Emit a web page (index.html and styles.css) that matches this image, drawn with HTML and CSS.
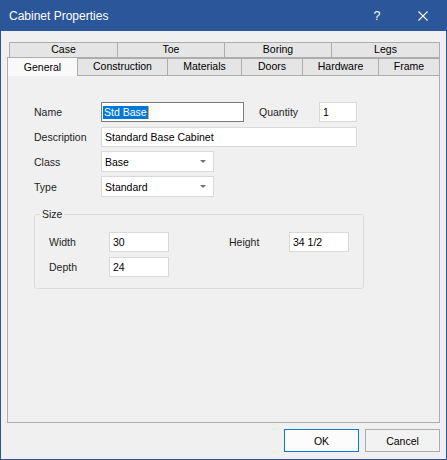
FILE: index.html
```html
<!DOCTYPE html>
<html>
<head>
<meta charset="utf-8">
<link rel="stylesheet" href="styles.css">
</head>
<body>
<div class="window">
  <div class="titlebar">
    <span class="title">Cabinet Properties</span>
    <span class="tbtn help">?</span>
    <span class="tbtn close"><svg width="10" height="10" viewBox="0 0 10 10"><path d="M0.5 0.5L9.5 9.5M9.5 0.5L0.5 9.5" stroke="#fff" stroke-width="1.1" fill="none"/></svg></span>
  </div>
  <div class="tabs">
    <div class="tabrow row1">
      <div class="tab t1a">Case</div>
      <div class="tab t1b">Toe</div>
      <div class="tab t1b">Boring</div>
      <div class="tab t1a">Legs</div>
    </div>
    <div class="tabrow row2">
      <div class="tab selected t-general">General</div>
      <div class="tab t-construction">Construction</div>
      <div class="tab t-materials">Materials</div>
      <div class="tab t-doors">Doors</div>
      <div class="tab t-hardware">Hardware</div>
      <div class="tab t-frame">Frame</div>
    </div>
  </div>
  <div class="panel">
    <div class="row">
      <span class="lbl">Name</span>
      <div class="input name-input"><span class="sel">Std Base</span><span class="caret"></span></div>
      <span class="lbl qty-lbl">Quantity</span>
      <div class="input qty">1</div>
    </div>
    <div class="row gap5">
      <span class="lbl">Description</span>
      <div class="input desc">Standard Base Cabinet</div>
    </div>
    <div class="row tall gap4">
      <span class="lbl">Class</span>
      <div class="input select"><span>Base</span><span class="arrow"></span></div>
    </div>
    <div class="row tall gap4">
      <span class="lbl">Type</span>
      <div class="input select"><span>Standard</span><span class="arrow"></span></div>
    </div>
    <div class="group">
      <span class="legend">Size</span>
      <div class="ggrid">
        <span class="lbl">Width</span>
        <div class="input">30</div>
        <span></span>
        <span class="lbl">Height</span>
        <div class="input">34 1/2</div>
        <span class="lbl">Depth</span>
        <div class="input">24</div>
      </div>
    </div>
  </div>
  <div class="footer">
    <button class="btn ok">OK</button>
    <button class="btn">Cancel</button>
  </div>
</div>
</body>
</html>
```

FILE: styles.css
```css
* { box-sizing: border-box; }
html, body { margin: 0; padding: 0; }
body {
  width: 447px;
  height: 460px;
  overflow: hidden;
  background: #f0f0f0;
  font-family: "Liberation Sans", Arial, sans-serif;
  font-size: 10.5px;
  color: #000;
}
.window {
  width: 447px;
  height: 460px;
  border: 1px solid #2b579a;
  border-top: 0;
  display: flex;
  flex-direction: column;
  background: #f0f0f0;
}
.titlebar {
  height: 31px;
  margin: 0 -1px;
  background: #2b579a;
  color: #fff;
  display: flex;
  align-items: center;
  padding-left: 9px;
  padding-right: 1px;
}
.title { flex: 1; font-size: 12px; }
.tbtn {
  width: 46px;
  height: 31px;
  display: flex;
  align-items: center;
  justify-content: center;
}
.help { font-size: 12.5px; }
.tabs { margin-top: 11px; }
.tabrow { display: flex; }
.row1 { margin-left: 8px; height: 16px; }
.row2 { margin-left: 6px; height: 17px; align-items: flex-end; }
.tab {
  border: 1px solid #adadad;
  background: #e5e5e5;
  text-align: center;
  color: #000;
  white-space: nowrap;
}
.tab + .tab { margin-left: -1px; }
.row1 .tab { height: 16px; line-height: 13px; padding-bottom: 1px; }
.t1a { width: 109px; }
.t1b { width: 108px; }
.row2 .tab { height: 17px; border-bottom: 0; line-height: 15px; }
.row2 .tab.selected {
  position: relative;
  z-index: 1;
  height: 19px;
  margin-bottom: -1px;
  padding-top: 2px;
  background: #f9f9f9;
}
.t-general { width: 71px; }
.t-construction { width: 91px; }
.t-materials { width: 75px; }
.t-doors { width: 62px; }
.t-hardware { width: 77px; }
.t-frame { width: 62px; }
.panel {
  margin-left: 6px;
  width: 433px;
  height: 348px;
  border: 1px solid #adadad;
  padding: 26px 0 0 26px;
}
.row { display: flex; align-items: center; height: 20px; }
.row.tall { height: 21px; }
.gap5 { margin-top: 5px; }
.gap4 { margin-top: 4px; }
.lbl { color: #1e1e1e; }
.row .lbl { width: 67px; }
.row .qty-lbl { width: 60px; margin-left: 15px; }
.input {
  height: 100%;
  background: #fff;
  border: 1px solid #d9d9d9;
  padding-left: 3px;
  display: flex;
  align-items: center;
  white-space: nowrap;
}
.name-input { width: 143px; border-color: #7a7a7a; padding-left: 1px; }
.sel {
  background: #0078d7;
  color: #fff;
  padding: 0 1px;
  line-height: 13px;
}
.caret { width: 1px; height: 13px; background: #f3a23b; }
.qty { width: 38px; }
.desc { width: 256px; }
.select { width: 113px; }
.arrow {
  margin-left: auto;
  margin-right: 7px;
  width: 0;
  height: 0;
  border-left: 3px solid transparent;
  border-right: 3px solid transparent;
  border-top: 3px solid #707070;
}
.group {
  position: relative;
  margin-top: 17px;
  width: 330px;
  height: 75px;
  border: 1px solid #dcdcdc;
  border-radius: 3px;
  padding: 17px 0 0 14px;
}
.legend {
  position: absolute;
  top: -8px;
  left: 5px;
  padding: 0 2px;
  background: #f0f0f0;
  line-height: 14px;
  color: #1e1e1e;
}
.ggrid {
  display: grid;
  grid-template-columns: 60px 60px 60px 60px 60px;
  grid-auto-rows: 20px;
  row-gap: 5px;
  align-items: center;
}
.footer {
  margin-top: 6px;
  display: flex;
  justify-content: flex-end;
  gap: 6px;
  padding-right: 6px;
}
.btn {
  width: 75px;
  height: 23px;
  border: 1px solid #adadad;
  background: #f2f2f2;
  font-family: "Liberation Sans", Arial, sans-serif;
  font-size: 10.5px;
  color: #000;
  padding: 0;
  margin: 0;
}
.btn.ok { border-color: #0078d7; background: #fcfcfc; }
```
